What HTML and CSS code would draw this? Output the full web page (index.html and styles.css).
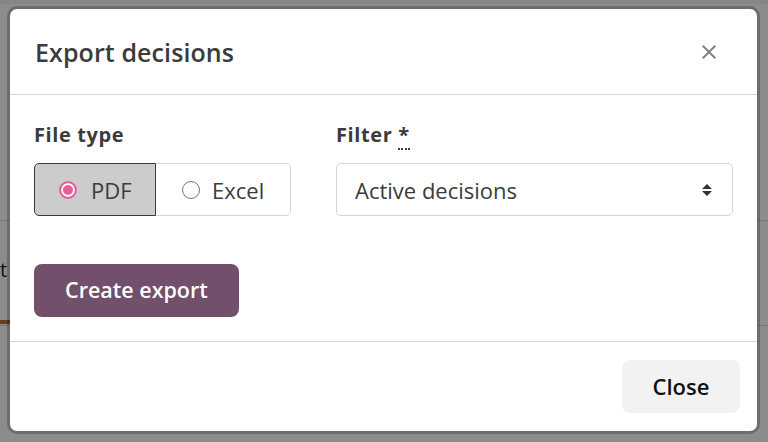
FILE: index.html
```html
<!DOCTYPE html>
<html lang="en">
<head>
<meta charset="utf-8">
<title>Export decisions</title>
<link rel="stylesheet" href="styles.css">
</head>
<body>
<div class="page">
  <div class="page-top"></div>
  <div class="page-rule rule-a"></div>
  <div class="page-word">t</div>
  <div class="page-accent"></div>
  <div class="page-rule rule-b"></div>
</div>
<div class="overlay"></div>
<div class="modal" role="dialog" aria-labelledby="modal-title">
  <div class="modal-header">
    <h2 id="modal-title" class="modal-title">Export decisions</h2>
    <button class="modal-x" aria-label="Close">
      <svg width="14" height="14" viewBox="0 0 14 14"><path d="M1.5 1.5 L12.5 12.5 M12.5 1.5 L1.5 12.5" stroke="#808080" stroke-width="2" stroke-linecap="square" fill="none"/></svg>
    </button>
  </div>
  <div class="modal-body">
    <div class="fields">
      <div class="field field-type">
        <div class="field-label">File type</div>
        <div class="segmented">
          <label class="seg seg-active"><span class="radio radio-on"></span>PDF</label>
          <label class="seg seg-rest"><span class="radio"></span>Excel</label>
        </div>
      </div>
      <div class="field field-filter">
        <div class="field-label">Filter <abbr class="req" title="required">*</abbr></div>
        <div class="select">
          <span class="select-value">Active decisions</span>
          <svg class="select-arrows" width="12" height="16" viewBox="0 0 12 16"><path d="M6 2 L11 7 H1 Z M6 14 L11 9 H1 Z" fill="#333"/></svg>
        </div>
      </div>
    </div>
    <button class="btn btn-primary">Create export</button>
  </div>
  <div class="modal-footer">
    <button class="btn btn-light">Close</button>
  </div>
</div>
</body>
</html>
```
FILE: styles.css
```css
* { box-sizing: border-box; }
html, body { margin: 0; padding: 0; }
body {
  width: 768px;
  height: 442px;
  overflow: hidden;
  font-family: "Open Sans", "Noto Sans", sans-serif;
  background: #ffffff;
  position: relative;
}
.page { position: absolute; inset: 0; }
.page-top { position: absolute; left: 0; top: 0; width: 768px; height: 4px; background: #f4f4f4; }
.page-rule { position: absolute; left: 0; width: 768px; height: 1px; background: #d6d6d6; }
.rule-a { top: 220px; }
.rule-b { top: 325px; }
.page-word { position: absolute; left: 0; top: 258px; font-size: 20px; line-height: 24px; color: #222; }
.page-accent { position: absolute; left: 0; top: 320px; width: 10px; height: 4px; background: #c86a3a; }
.overlay { position: absolute; inset: 0; background: rgba(0,0,0,0.45); }

.modal {
  position: absolute;
  left: 10px;
  top: 9px;
  width: 747px;
  height: 422px;
  background: #fff;
  border-radius: 7px;
  box-shadow: 0 0 0 3px rgba(0,0,0,0.22);
  display: flex;
  flex-direction: column;
  color: #3b3b3b;
}
.modal-header {
  height: 86px;
  border-bottom: 1px solid #d4d4d4;
  display: flex;
  align-items: center;
  justify-content: space-between;
  padding: 0 41px 0 25px;
}
.modal-title { margin: 0; font-size: 25px; font-weight: 600; letter-spacing: 0.1px; color: #3b3b3b; line-height: 30px; }
.modal-x { background: none; border: 0; padding: 0; width: 14px; height: 14px; display: flex; }
.modal-body {
  padding: 29px 24px 24px 24px;
  border-bottom: 1px solid #d4d4d4;
}
.fields { display: flex; gap: 45px; }
.field-type { width: 257px; }
.field-filter { width: 397px; }
.field-label { font-size: 20px; font-weight: 700; letter-spacing: 0.6px; color: #3b3b3b; height: 22px; line-height: 22px; margin-bottom: 17px; }
.req { text-decoration: none; border-bottom: 2px dotted #3b3b3b; }
.segmented { display: flex; height: 53px; }
.seg {
  display: flex; align-items: center; gap: 12px;
  font-size: 22px; color: #3b3b3b;
  border: 1px solid #d4d4d4;
  border-left: 0;
  border-radius: 0 5px 5px 0;
  padding-left: 26px;
  flex: 1;
}
.seg-active {
  flex: 0 0 122px;
  gap: 14px;
  background: #cccccc;
  border: 1px solid #3a3a3a;
  border-radius: 5px 0 0 5px;
  padding-left: 24px;
}
.radio {
  flex: 0 0 18px;
  width: 18px; height: 18px; border-radius: 50%;
  border: 1.5px solid #767676;
  background: #fff;
}
.radio-on {
  border: 2px solid #e85f9c;
  background: #e85f9c;
  box-shadow: inset 0 0 0 2px #fff;
}
.select {
  height: 53px;
  border: 1px solid #d4d4d4;
  border-radius: 5px;
  display: flex; align-items: center; justify-content: space-between;
  padding: 0 19px 0 18px;
  font-size: 22px; color: #3b3b3b;
}
.btn { font-family: inherit; border: 0; cursor: pointer; }
.btn-primary {
  margin-top: 48px;
  height: 53px;
  padding: 0 31px 2px;
  background: #72506b;
  color: #fff;
  font-size: 21.5px;
  font-weight: 600;
  border-radius: 8px;
}
.modal-footer { flex: 1; display: flex; justify-content: flex-end; align-items: flex-start; padding: 18px 17px 0 0; }
.btn-light {
  height: 53px;
  width: 118px;
  padding-bottom: 2px;
  background: #f2f2f2;
  color: #111;
  font-size: 22px;
  font-weight: 600;
  border-radius: 8px;
}
```
